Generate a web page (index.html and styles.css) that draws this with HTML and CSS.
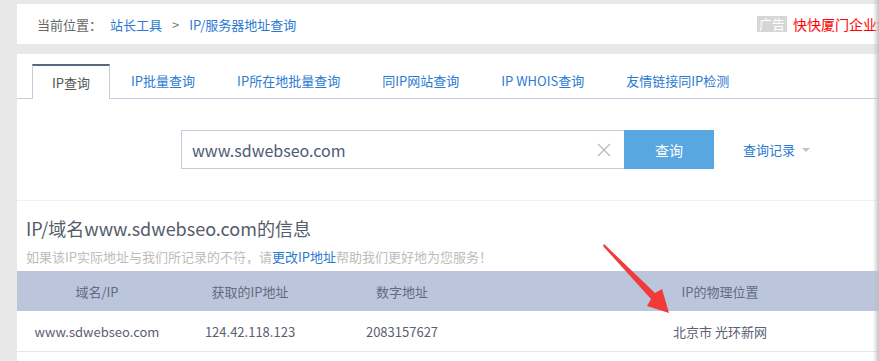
FILE: index.html
```html
<!DOCTYPE html>
<html lang="zh-CN">
<head>
<meta charset="utf-8">
<title>IP/服务器地址查询</title>
<link rel="stylesheet" href="styles.css">
</head>
<body>
<div class="page">
  <div class="crumb-bar">
    <div class="crumb">
      <span class="crumb-label">当前位置：</span>
      <a class="link" href="#">站长工具</a>
      <span class="crumb-sep">&gt;</span>
      <a class="link" href="#">IP/服务器地址查询</a>
    </div>
    <div class="ad">
      <span class="ad-tag">广告</span>
      <span class="ad-text">快快厦门企业级</span>
    </div>
  </div>

  <div class="main">
    <ul class="tabs">
      <li class="tab active">IP查询</li>
      <li class="tab">IP批量查询</li>
      <li class="tab">IP所在地批量查询</li>
      <li class="tab">同IP网站查询</li>
      <li class="tab">IP WHOIS查询</li>
      <li class="tab">友情链接同IP检测</li>
    </ul>

    <div class="search-row">
      <div class="search-box">
        <span class="search-text">www.sdwebseo.com</span>
        <svg class="clear" width="14" height="14" viewBox="0 0 14 14"><path d="M1 1 L13 13 M13 1 L1 13" stroke="#b8b8b8" stroke-width="1.2" fill="none"/></svg>
      </div>
      <button class="search-btn">查询</button>
      <a class="history" href="#">查询记录<span class="caret"></span></a>
    </div>

    <div class="result">
      <h2 class="result-title">IP/域名www.sdwebseo.com的信息</h2>
      <p class="result-note">如果该IP实际地址与我们所记录的不符，请<a class="link" href="#">更改IP地址</a>帮助我们更好地为您服务！</p>
      <table class="result-table">
        <thead>
          <tr>
            <th class="c1">域名/IP</th>
            <th class="c2">获取的IP地址</th>
            <th class="c3">数字地址</th>
            <th class="c4">IP的物理位置</th>
          </tr>
        </thead>
        <tbody>
          <tr>
            <td>www.sdwebseo.com</td>
            <td>124.42.118.123</td>
            <td>2083157627</td>
            <td>北京市 光环新网</td>
          </tr>
        </tbody>
      </table>
    </div>
  </div>
</div>

<svg class="arrow" width="879" height="361" viewBox="0 0 879 361">
  <polygon points="604,244 655,293 662,289 669,313 647,306 651,299 603,246" fill="#f23a3a"/>
</svg>
<div class="edge-shadow"></div>
</body>
</html>
```

FILE: styles.css
```css
html, body {
  margin: 0;
  padding: 0;
}
body {
  background: #e8e8e8;
  font-family: "Noto Sans CJK SC", "Noto Sans", sans-serif;
  font-size: 13px;
  color: #555;
  width: 879px;
  height: 361px;
  overflow: hidden;
  position: relative;
}
a {
  text-decoration: none;
}
.link {
  color: #2a7ad2;
}
.page {
  padding: 4px 0 0 17px;
  width: 1000px;
}
.crumb-bar {
  background: #fff;
  height: 40px;
  display: flex;
  align-items: center;
  padding-left: 20px;
}
.crumb {
  display: flex;
  align-items: center;
  width: 720px;
}
.crumb-label {
  color: #666;
  margin-right: 8px;
}
.crumb-sep {
  color: #777;
  margin: 0 10px;
}
.ad {
  display: flex;
  align-items: center;
}
.ad-tag {
  background: #d6d6d6;
  color: #fff;
  font-size: 13px;
  line-height: 16px;
  padding: 0 2px;
  margin-right: 6px;
}
.ad-text {
  color: #f00;
  font-size: 14px;
  white-space: nowrap;
}
.main {
  background: #fff;
  margin-top: 10px;
  padding-top: 10px;
  height: 400px;
}
.tabs {
  list-style: none;
  margin: 0;
  padding: 0 0 0 15px;
  display: flex;
  border-bottom: 1px solid #c3cde0;
  height: 34px;
}
.tab {
  padding: 0 21px;
  line-height: 34px;
  color: #2a7ad2;
  white-space: nowrap;
}
.tab.active {
  color: #555;
  border: 1px solid #c3cde0;
  border-top: 2px solid #5a6680;
  border-bottom: none;
  background: #fff;
  line-height: 33px;
  height: 33px;
  padding: 0 19px;
}
.search-row {
  display: flex;
  align-items: center;
  margin-top: 31px;
  padding-left: 164px;
  height: 39px;
}
.search-box {
  box-sizing: border-box;
  width: 443px;
  height: 39px;
  border: 1px solid #c3cbdc;
  border-right: none;
  display: flex;
  align-items: center;
  justify-content: space-between;
  padding: 0 13px 0 10px;
}
.search-text {
  font-size: 16px;
  color: #4f5a78;
}
.search-btn {
  width: 90px;
  height: 39px;
  border: none;
  background: #58a7e1;
  color: #fff;
  font-family: inherit;
  font-size: 14px;
  padding: 0;
}
.history {
  margin-left: 29px;
  color: #2a7ad2;
  display: flex;
  align-items: center;
}
.caret {
  display: inline-block;
  margin-left: 7px;
  border-left: 4px solid transparent;
  border-right: 4px solid transparent;
  border-top: 4px solid #c3c3c3;
}
.result {
  margin-top: 31px;
  border-top: 1px solid #f1f1f1;
}
.result-title {
  margin: 0;
  padding: 14px 0 0 9px;
  font-size: 18px;
  font-weight: normal;
  color: #555c6c;
  line-height: 26px;
}
.result-note {
  margin: 0;
  padding: 6px 0 0 9px;
  font-size: 13px;
  line-height: 20px;
  color: #bdbdbd;
  height: 24px;
}
.result-table {
  border-collapse: collapse;
  table-layout: fixed;
  width: 942px;
}
.result-table th {
  background: #bbc6dd;
  color: #636b7e;
  font-weight: normal;
  height: 40px;
  padding: 0;
}
.result-table td {
  height: 40px;
  padding: 0;
  text-align: center;
  color: #5b6072;
  border-bottom: 1px solid #e6e6e6;
}
.c1 { width: 160px; }
.c2 { width: 146px; }
.c3 { width: 158px; }
.c4 { width: 478px; }
.arrow {
  position: absolute;
  top: 0;
  left: 0;
  pointer-events: none;
}
.edge-shadow {
  position: absolute;
  top: 0;
  right: 0;
  width: 6px;
  height: 361px;
  background: linear-gradient(to right, rgba(200,200,200,0), rgba(190,190,190,0.9));
}
```
